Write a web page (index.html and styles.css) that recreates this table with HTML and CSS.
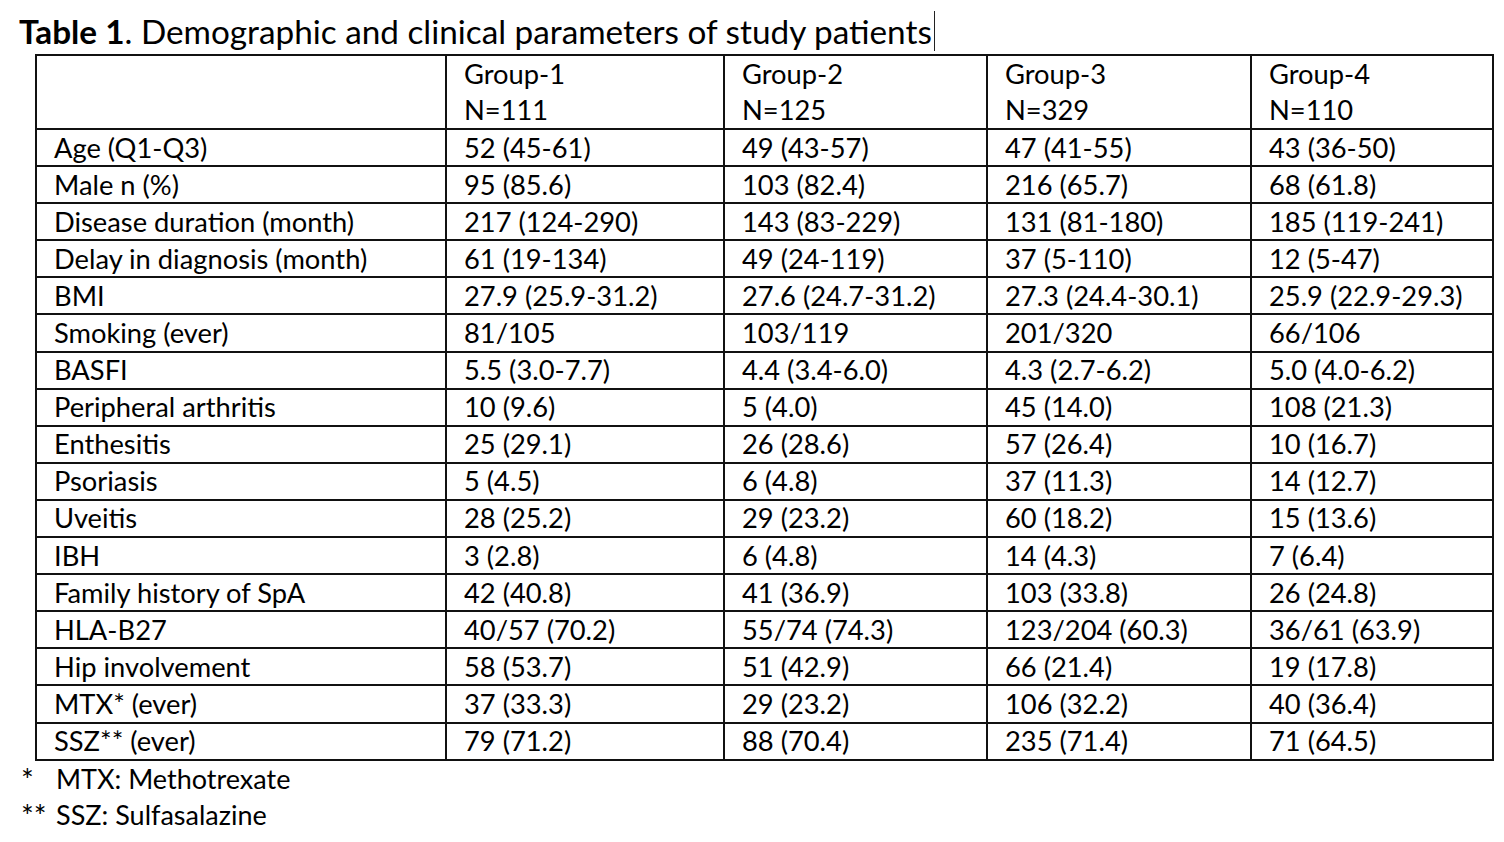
FILE: index.html
```html
<!DOCTYPE html>
<html>
<head>
<meta charset="utf-8">
<link rel="stylesheet" href="styles.css">
</head>
<body>
<div class="page">
  <h1 class="title"><span class="caret"><b>Table 1</b>. Demographic and clinical parameters of study patients</span></h1>
  <table class="tbl">
    <colgroup>
      <col class="c0"><col class="c1"><col class="c2"><col class="c3"><col class="c4">
    </colgroup>
    <tr class="head"><td></td><td>Group-1<br>N=111</td><td>Group-2<br>N=125</td><td>Group-3<br>N=329</td><td>Group-4<br>N=110</td></tr>
    <tr><td>Age (Q1-Q3)</td><td>52 (45-61)</td><td>49 (43-57)</td><td>47 (41-55)</td><td>43 (36-50)</td></tr>
    <tr><td>Male n (%)</td><td>95 (85.6)</td><td>103 (82.4)</td><td>216 (65.7)</td><td>68 (61.8)</td></tr>
    <tr><td>Disease duration (month)</td><td>217 (124-290)</td><td>143 (83-229)</td><td>131 (81-180)</td><td>185 (119-241)</td></tr>
    <tr><td>Delay in diagnosis (month)</td><td>61 (19-134)</td><td>49 (24-119)</td><td>37 (5-110)</td><td>12 (5-47)</td></tr>
    <tr><td>BMI</td><td>27.9 (25.9-31.2)</td><td>27.6 (24.7-31.2)</td><td>27.3 (24.4-30.1)</td><td>25.9 (22.9-29.3)</td></tr>
    <tr><td>Smoking (ever)</td><td>81/105</td><td>103/119</td><td>201/320</td><td>66/106</td></tr>
    <tr><td>BASFI</td><td>5.5 (3.0-7.7)</td><td>4.4 (3.4-6.0)</td><td>4.3 (2.7-6.2)</td><td>5.0 (4.0-6.2)</td></tr>
    <tr><td>Peripheral arthritis</td><td>10 (9.6)</td><td>5 (4.0)</td><td>45 (14.0)</td><td>108 (21.3)</td></tr>
    <tr><td>Enthesitis</td><td>25 (29.1)</td><td>26 (28.6)</td><td>57 (26.4)</td><td>10 (16.7)</td></tr>
    <tr><td>Psoriasis</td><td>5 (4.5)</td><td>6 (4.8)</td><td>37 (11.3)</td><td>14 (12.7)</td></tr>
    <tr><td>Uveitis</td><td>28 (25.2)</td><td>29 (23.2)</td><td>60 (18.2)</td><td>15 (13.6)</td></tr>
    <tr><td>IBH</td><td>3 (2.8)</td><td>6 (4.8)</td><td>14 (4.3)</td><td>7 (6.4)</td></tr>
    <tr><td>Family history of SpA</td><td>42 (40.8)</td><td>41 (36.9)</td><td>103 (33.8)</td><td>26 (24.8)</td></tr>
    <tr><td>HLA-B27</td><td>40/57 (70.2)</td><td>55/74 (74.3)</td><td>123/204 (60.3)</td><td>36/61 (63.9)</td></tr>
    <tr><td>Hip involvement</td><td>58 (53.7)</td><td>51 (42.9)</td><td>66 (21.4)</td><td>19 (17.8)</td></tr>
    <tr><td>MTX* (ever)</td><td>37 (33.3)</td><td>29 (23.2)</td><td>106 (32.2)</td><td>40 (36.4)</td></tr>
    <tr><td>SSZ** (ever)</td><td>79 (71.2)</td><td>88 (70.4)</td><td>235 (71.4)</td><td>71 (64.5)</td></tr>
  </table>
  <div class="notes">
    <div class="note"><span class="mark">*</span><span>MTX: Methotrexate</span></div>
    <div class="note"><span class="mark">**</span><span>SSZ: Sulfasalazine</span></div>
  </div>
</div>
</body>
</html>
```
FILE: styles.css
```css
html, body {
  margin: 0;
  padding: 0;
  background: #ffffff;
}
.page {
  font-family: Lato, "Open Sans", sans-serif;
  color: #000000;
  padding: 12px 0 0 19px;
}
.title {
  margin: 0;
  font-size: 33.3px;
  font-weight: 400;
  line-height: 38px;
  height: 42px;
}
.title b {
  font-weight: 700;
}
.caret {
  border-right: 1px solid #222;
  padding-right: 2px;
}
.tbl {
  margin-left: 16px;
  border-collapse: collapse;
  width: 1457px;
  table-layout: fixed;
  font-size: 27.3px;
}
.c0 { width: 410px; }
.c1 { width: 278px; }
.c2 { width: 263px; }
.c3 { width: 264px; }
.c4 { width: 242px; }
.tbl td {
  border: 2px solid #111;
  height: 37.1px;
  padding: 0 0 0 17px;
  box-sizing: border-box;
  line-height: 30px;
  vertical-align: middle;
  white-space: nowrap;
}
.tbl .head td {
  height: 72px;
  line-height: 36px;
  padding-top: 0;
}
.notes {
  font-size: 27px;
  line-height: 36px;
  margin-top: 0;
}
.note {
  display: flex;
}
.mark {
  width: 35px;
  font-size: 30px;
  padding-left: 2px;
}
```
